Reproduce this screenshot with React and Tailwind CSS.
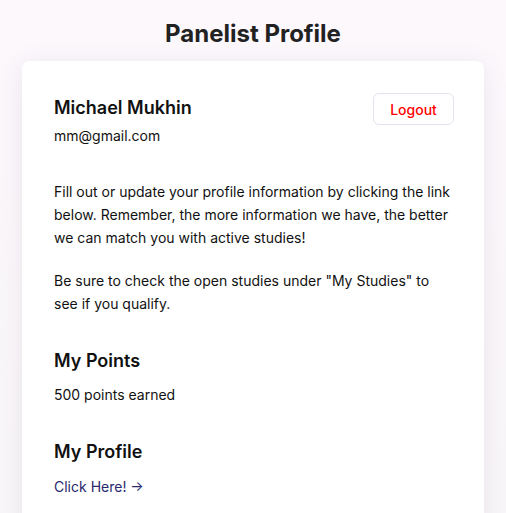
export default function App() {
  return (
    <div
      className="min-h-[513px] bg-gradient-to-b from-[#fcf8fc] to-[#f8f6f8] pt-[19px] pb-10 text-[#111]"
      style={{ fontFamily: "Inter, 'Noto Sans', sans-serif" }}
    >
      <h1 className="text-center text-[24px] leading-[30px] font-bold text-[#222]">
        Panelist Profile
      </h1>

      <div className="mx-[22px] mt-[12px] rounded-lg bg-white px-8 pt-[33px] pb-10 shadow-[0_4px_24px_rgba(120,100,130,0.12)]">
        {/* Header */}
        <div className="flex items-start justify-between">
          <div>
            <h2 className="text-[18px] leading-[28px] font-semibold">Michael Mukhin</h2>
            <p className="mt-1 text-[14px] leading-5">mm@gmail.com</p>
          </div>
          <button
            type="button"
            className="-mr-0.5 -mt-px h-8 w-[81px] rounded-md border border-[#e4e2ef] text-[14px] font-medium text-[#ff0000]"
          >
            Logout
          </button>
        </div>

        {/* Intro */}
        <div className="mt-[34px] text-[14px] leading-[23px]">
          <p>
            Fill out or update your profile information by clicking the link below. Remember, the
            more information we have, the better we can match you with active studies!
          </p>
          <p className="mt-5">
            Be sure to check the open studies under "My Studies" to see if you qualify.
          </p>
        </div>

        {/* Points */}
        <h3 className="mt-8 text-[18px] leading-[28px] font-semibold">My Points</h3>
        <p className="mt-[10px] text-[14px] leading-5">500 points earned</p>

        {/* Profile */}
        <h3 className="mt-[33px] text-[18px] leading-[28px] font-semibold">My Profile</h3>
        <a href="#" className="mt-[11px] block text-[14px] leading-5 text-[#29286e]">
          Click Here! →
        </a>
      </div>
    </div>
  );
}
